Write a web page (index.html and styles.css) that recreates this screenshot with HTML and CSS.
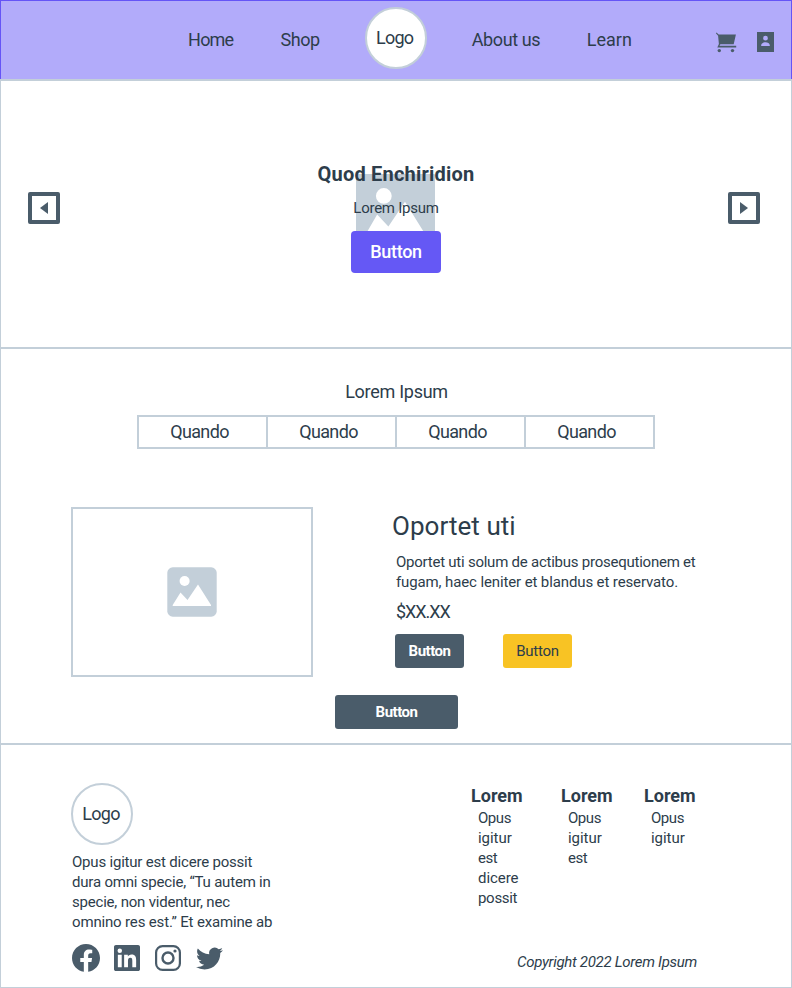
FILE: index.html
```html
<!DOCTYPE html>
<html lang="en">
<head>
<meta charset="utf-8">
<title>Lorem Ipsum</title>
<link rel="stylesheet" href="styles.css">
</head>
<body>
<header class="header">
  <nav class="nav">
    <a class="home">Home</a>
    <a class="shop">Shop</a>
    <a class="logo"><span>Logo</span></a>
    <a class="about">About us</a>
    <a class="learn">Learn</a>
  </nav>
  <div class="actions">
    <svg width="22" height="22" viewBox="-.7 .8 22 22"><path d="M.8 1.200 3 3.200h17.200L18 13H4.700l-.9 1.600h16.700v1.800H1.600l1.600-3.600L2.400 4.600.2 2z"/><circle cx="3.600" cy="19.400" r="1.700"/><circle cx="16.800" cy="19.400" r="1.700"/></svg>
    <svg width="17" height="20" viewBox="0 0 17 20"><path fill-rule="evenodd" d="M0 0h17v20H0zM8.500 3.800a2.400 2.400 0 1 0 0 4.800 2.400 2.400 0 0 0 0-4.800zM4.200 14h8.600v-.8c0-1.700-2.200-2.900-4.300-2.900s-4.300 1.200-4.300 2.900z"/></svg>
  </div>
</header>

<section class="hero">
  <button class="arrow" aria-label="Previous"><svg width="8" height="12" viewBox="0 0 8 12"><path d="M8 0v12L0 6z"/></svg></button>
  <div class="hero-content">
    <svg class="hero-image" viewBox="0 0 50 50"><rect width="50" height="50" rx=".6"/><g fill="#fff"><circle cx="17.600" cy="13.900" r="5"/><path d="M5.700 39 13.400 25.600 20.500 33.200 31 17.500 44.300 39z"/></g></svg>
    <h1>Quod Enchiridion</h1>
    <p>Lorem Ipsum</p>
    <button class="btn primary">Button</button>
  </div>
  <button class="arrow" aria-label="Next"><svg width="8" height="12" viewBox="0 0 8 12"><path d="M0 0v12l8-6z"/></svg></button>
</section>

<main class="catalog">
  <h2>Lorem Ipsum</h2>
  <ul class="tabs"><li>Quando</li><li>Quando</li><li>Quando</li><li>Quando</li></ul>
  <article class="product">
    <div class="thumb">
      <svg width="50" height="50" viewBox="0 0 50 50"><rect x=".3" y=".3" width="49.400" height="49.400" rx="5.500"/><g fill="#fff"><circle cx="17.600" cy="14" r="5"/><path d="M5.700 39v-1L13.500 25.600 20.500 33 31 17.600 44 38v1z"/></g></svg>
    </div>
    <div class="details">
      <h3>Oportet uti</h3>
      <p class="desc"><span>Oportet uti solum de actibus prosequtionem et</span><br><span class="second">fugam, haec leniter et blandus et reservato.</span></p>
      <p class="price">$XX.XX</p>
      <div class="buttons">
        <button class="btn dark">Button</button>
        <button class="btn yellow">Button</button>
      </div>
    </div>
  </article>
  <button class="btn dark more">Button</button>
</main>

<footer class="footer">
  <div class="brand">
    <a class="logo"><span>Logo</span></a>
    <p>Opus igitur est dicere possit<br>dura omni specie, “Tu autem in<br>specie, non videntur, nec<br><span class="last">omnino res est.” Et examine ab</span></p>
    <div class="social">
      <svg width="28" height="28" viewBox="0 0 24 24"><path d="M24 12c0-6.627-5.373-12-12-12S0 5.373 0 12c0 5.990 4.388 10.954 10.125 11.854v-8.385H7.078V12h3.047V9.357c0-3.007 1.792-4.669 4.533-4.669 1.312 0 2.686.235 2.686.235v2.953H15.830c-1.491 0-1.956.925-1.956 1.874V12h3.328l-.532 3.469h-2.796v8.385C19.612 22.954 24 17.990 24 12z"/></svg>
      <svg width="26" height="26" viewBox="0 0 24 24"><path d="M20.447 20.452h-3.554v-5.569c0-1.328-.027-3.037-1.852-3.037-1.853 0-2.136 1.445-2.136 2.939v5.667H9.351V9h3.414v1.561h.046c.477-.9 1.637-1.850 3.370-1.850 3.601 0 4.267 2.370 4.267 5.455v6.286zM5.337 7.433a2.062 2.062 0 0 1-2.063-2.065 2.064 2.064 0 1 1 2.063 2.065zm1.782 13.019H3.555V9h3.564v11.452zM22.225 0H1.771C.792 0 0 .774 0 1.729v20.542C0 23.227.792 24 1.771 24h20.451C23.200 24 24 23.227 24 22.271V1.729C24 .774 23.200 0 22.222 0h.003z"/></svg>
      <svg width="26" height="26" viewBox="0 0 26 26"><rect x="1.100" y="1.100" width="23.800" height="23.800" rx="6.500" fill="none" stroke="currentColor" stroke-width="2.200"/><circle cx="13" cy="13" r="5.500" fill="none" stroke="currentColor" stroke-width="2.400"/><circle cx="20" cy="6" r="1.600"/></svg>
      <svg class="bird" width="27" height="27" viewBox="0 0 24 24"><path d="M23.953 4.570a10 10 0 0 1-2.825.775 4.958 4.958 0 0 0 2.163-2.723c-.951.555-2.005.959-3.127 1.184a4.920 4.920 0 0 0-8.384 4.482C7.690 8.095 4.067 6.130 1.640 3.162a4.822 4.822 0 0 0-.666 2.475c0 1.710.870 3.213 2.188 4.096a4.904 4.904 0 0 1-2.228-.616v.060a4.923 4.923 0 0 0 3.946 4.827 4.996 4.996 0 0 1-2.212.085 4.936 4.936 0 0 0 4.604 3.417 9.867 9.867 0 0 1-6.102 2.105c-.390 0-.779-.023-1.170-.067a13.995 13.995 0 0 0 7.557 2.209c9.053 0 13.998-7.496 13.998-13.985 0-.210 0-.420-.015-.630A9.935 9.935 0 0 0 24 4.590z"/></svg>
    </div>
  </div>
  <div class="links">
    <div class="columns">
      <div><h4>Lorem</h4><ul><li>Opus</li><li class="wide">igitur</li><li>est</li><li class="wide">dicere</li><li class="mid">possit</li></ul></div>
      <div><h4>Lorem</h4><ul><li>Opus</li><li class="wide">igitur</li><li>est</li></ul></div>
      <div><h4>Lorem</h4><ul><li>Opus</li><li class="wide">igitur</li></ul></div>
    </div>
    <p class="copyright">Copyright 2022 Lorem Ipsum</p>
  </div>
</footer>
</body>
</html>
```
FILE: styles.css
```css
* { box-sizing: border-box; margin: 0; padding: 0; }
body {
  width: 792px;
  background: #fff;
  color: #2d3d4b;
  font: 400 15px/20px Roboto, "Liberation Sans", sans-serif;
  letter-spacing: -.2px;
}
ul { list-style: none; }
svg { display: block; fill: currentColor; flex: none; }
button { font: inherit; letter-spacing: inherit; border: 0; }

.header {
  display: flex;
  height: 79px;
  border: 1px solid #6554f6;
  border-bottom: 0;
  background: #b2abfa;
}
.nav {
  display: grid;
  grid-template-columns: 92.5px 84.700px 106.5px 115px 1fr;
  align-items: start;
  width: 714px;
  padding-left: 187.100px;
  font-size: 18px;
  line-height: 24px;
  letter-spacing: -.5px;
}
.nav > a { margin-top: 27px; }
.nav > .home { letter-spacing: -.8px; }
.nav > .about { letter-spacing: -.4px; }
.nav > .learn { letter-spacing: 0; }
.nav > .logo { margin-top: 6px; }
.logo {
  display: flex;
  align-items: center;
  justify-content: center;
  width: 62px;
  height: 62px;
  border: 2px solid #c3cfd9;
  border-radius: 50%;
  background: #fff;
  font-size: 18px;
  line-height: 24px;
  letter-spacing: -.75px;
}
.logo span { margin-right: 2px; }
.nav .logo span { margin-right: 3.200px; }
.actions { display: flex; gap: 20px; padding-top: 31px; color: #4a5c6a; }

.hero {
  display: flex;
  justify-content: space-between;
  height: 268px;
  padding: 81px 31px 0 27px;
  border: 1px solid #c3cfd9;
  border-width: 2px 1px 0;
}
.arrow {
  display: grid;
  place-items: center;
  width: 32px;
  height: 32px;
  margin-top: 30px;
  border: 4px solid #4a5c6a;
  border-radius: 2px;
  background: #fff;
  color: #4a5c6a;
}
.hero-content { position: relative; width: 240px; margin-left: 4px; text-align: center; }
.hero-image {
  position: absolute;
  z-index: -1;
  left: 80px;
  top: 12px;
  width: 79px;
  height: 79px;
  color: #c3cfd9;
}
.hero h1 { font-size: 20px; line-height: 24px; letter-spacing: .2px; }
.hero p { margin: 12px 0 13px; letter-spacing: -.25px; }
.btn {
  display: block;
  width: 69px;
  height: 34px;
  border-radius: 3px;
  color: #fff;
  font-weight: 700;
  letter-spacing: -.5px;
  text-align: center;
}
.primary {
  width: 90px;
  height: 42px;
  margin: 0 auto;
  border-radius: 4px;
  background: #6558f5;
  font-size: 18px;
  font-weight: 500;
  letter-spacing: -.3px;
}
.dark { background: #4a5c6a; }
.yellow { background: #f8c324; color: #2d3d4b; font-weight: 400; letter-spacing: -.3px; }

.catalog {
  height: 396px;
  padding: 31px 70px 0;
  border: 1px solid #c3cfd9;
  border-width: 2px 1px 0;
}
.catalog h2 {
  padding-left: 1px;
  font-size: 18px;
  font-weight: 400;
  line-height: 24px;
  letter-spacing: -.28px;
  text-align: center;
}
.tabs {
  display: flex;
  width: 518px;
  height: 34px;
  margin: 11px 0 0 66px;
  border: 2px solid #c3cfd9;
}
.tabs li {
  width: 129px;
  padding: 3px 0 0 31.200px;
  border-right: 2px solid #c3cfd9;
  font-size: 18px;
  line-height: 24px;
  letter-spacing: -.65px;
}
.tabs li:last-child { border: 0; width: 127px; }
.product { display: flex; height: 170px; margin-top: 58px; }
.thumb {
  display: grid;
  place-items: center;
  width: 242px;
  height: 170px;
  border: 2px solid #c3cfd9;
  color: #c3cfd9;
}
.details { padding: 3px 0 0 82px; }
.details h3 { margin-left: -3px; font-size: 26px; font-weight: 400; line-height: 32px; letter-spacing: .05px; }
.desc { margin: 10px 0 8px; padding-left: 1px; white-space: nowrap; letter-spacing: -.24px; }
.desc .second { letter-spacing: -.12px; }
.price { padding-left: 1px; font-size: 18px; line-height: 24px; letter-spacing: -1.050px; }
.buttons { display: flex; gap: 39px; margin-top: 10px; }
.more { width: 123px; margin: 18px 0 0 264px; }

.footer {
  display: flex;
  height: 245px;
  padding: 38px 70px 0;
  border: 1px solid #c3cfd9;
  border-top-width: 2px;
}
.brand { width: 400px; }
.brand p { margin: 7px 0 12px 1px; letter-spacing: -.2px; }
.brand .last { letter-spacing: -.16px; }
.social { display: flex; align-items: center; gap: 14px; padding-left: 1px; color: #4a5c6a; }
.social svg:nth-child(3) { margin-left: 1px; }
.social .bird { margin-left: .6px; }
.columns { display: grid; grid-template-columns: 90px 83px 60px; height: 169px; padding-top: 1px; }
.columns h4 { font-size: 18px; line-height: 24px; letter-spacing: 0; }
.columns ul { padding-left: 7px; letter-spacing: -.45px; }
.columns .wide { letter-spacing: -.05px; }
.columns .mid { letter-spacing: -.3px; }
.copyright { padding-left: 46px; font-style: italic; letter-spacing: -.3px; }
```
